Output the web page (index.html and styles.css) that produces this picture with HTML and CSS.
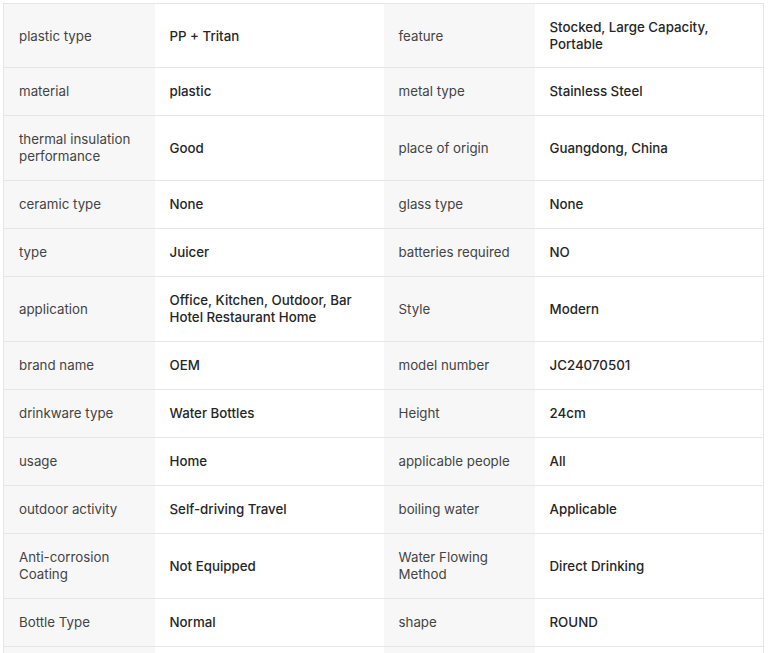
FILE: index.html
```html
<!DOCTYPE html>
<html lang="en">
<head>
<meta charset="utf-8">
<title>Specifications</title>
<link rel="stylesheet" href="styles.css">
</head>
<body>
<table class="spec">
  <colgroup>
    <col class="c-label"><col class="c-value"><col class="c-label"><col class="c-value">
  </colgroup>
  <tbody>
    <tr><td class="lbl">plastic type</td><td class="val">PP + Tritan</td><td class="lbl">feature</td><td class="val">Stocked, Large Capacity, Portable</td></tr>
    <tr><td class="lbl">material</td><td class="val">plastic</td><td class="lbl">metal type</td><td class="val">Stainless Steel</td></tr>
    <tr><td class="lbl">thermal insulation performance</td><td class="val">Good</td><td class="lbl">place of origin</td><td class="val">Guangdong, China</td></tr>
    <tr><td class="lbl">ceramic type</td><td class="val">None</td><td class="lbl">glass type</td><td class="val">None</td></tr>
    <tr><td class="lbl">type</td><td class="val">Juicer</td><td class="lbl">batteries required</td><td class="val">NO</td></tr>
    <tr><td class="lbl">application</td><td class="val">Office, Kitchen, Outdoor, Bar Hotel Restaurant Home</td><td class="lbl">Style</td><td class="val">Modern</td></tr>
    <tr><td class="lbl">brand name</td><td class="val">OEM</td><td class="lbl">model number</td><td class="val">JC24070501</td></tr>
    <tr><td class="lbl">drinkware type</td><td class="val">Water Bottles</td><td class="lbl">Height</td><td class="val">24cm</td></tr>
    <tr><td class="lbl">usage</td><td class="val">Home</td><td class="lbl">applicable people</td><td class="val">All</td></tr>
    <tr><td class="lbl">outdoor activity</td><td class="val">Self-driving Travel</td><td class="lbl">boiling water</td><td class="val">Applicable</td></tr>
    <tr><td class="lbl">Anti-corrosion Coating</td><td class="val">Not Equipped</td><td class="lbl">Water Flowing Method</td><td class="val">Direct Drinking</td></tr>
    <tr><td class="lbl">Bottle Type</td><td class="val">Normal</td><td class="lbl">shape</td><td class="val">ROUND</td></tr>
    <tr><td class="lbl">&nbsp;</td><td class="val">&nbsp;</td><td class="lbl">&nbsp;</td><td class="val">&nbsp;</td></tr>
  </tbody>
</table>
</body>
</html>
```

FILE: styles.css
```css
html, body {
  margin: 0;
  padding: 0;
  background: #ffffff;
}

body {
  padding: 3px 0 0 3px;
  font-family: Inter, "Noto Sans", "Liberation Sans", sans-serif;
  font-size: 13.3px;
  line-height: 17px;
  color: #222222;
}

.spec {
  width: 761px;
  border-collapse: collapse;
  table-layout: fixed;
  border: 1px solid #e6e6e6;
}

.c-label { width: 151px; }
.c-value { width: 229px; }

.spec td {
  border-top: 1px solid #e6e6e6;
  padding: 15px 15px 15px 15px;
  vertical-align: middle;
  text-align: left;
}

.spec tr:first-child td {
  border-top: none;
  padding-bottom: 14px;
}

.lbl {
  background: #f7f7f7;
  color: #444444;
  font-weight: 400;
}

.val {
  background: #ffffff;
  color: #262626;
  font-weight: 500;
  padding-left: 16px;
}
```
